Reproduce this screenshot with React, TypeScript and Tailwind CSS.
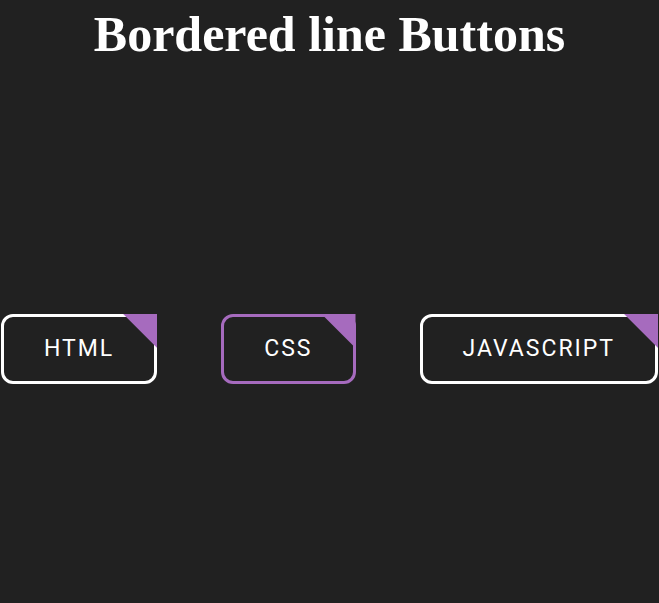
const buttons = [
  { label: "HTML", active: false },
  { label: "CSS", active: true },
  { label: "JAVASCRIPT", active: false },
];

function LineButton({ label, active }: { label: string; active: boolean }) {
  return (
    <button
      className={
        "relative rounded-[12px] border-[3px] bg-transparent px-10 py-5 text-[23px] leading-[24px] tracking-[2px] text-white " +
        (active ? "border-[#a66bbe]" : "border-white")
      }
      style={{ fontFamily: "Roboto, sans-serif" }}
    >
      <span className="absolute -right-[3px] -top-[3px] h-[34px] w-[34px] bg-[#a66bbe] [clip-path:polygon(0_0,100%_0,100%_100%)]" />
      {label}
    </button>
  );
}

export default function App() {
  return (
    <div className="min-h-screen bg-[#212121] text-white">
      <h1
        className="pt-[6px] text-center text-[50px] font-bold leading-[57px]"
        style={{ fontFamily: '"Liberation Serif", serif' }}
      >
        Bordered line Buttons
      </h1>
      <div className="mt-[251px] flex justify-center gap-16">
        {buttons.map((b) => (
          <LineButton key={b.label} label={b.label} active={b.active} />
        ))}
      </div>
    </div>
  );
}
